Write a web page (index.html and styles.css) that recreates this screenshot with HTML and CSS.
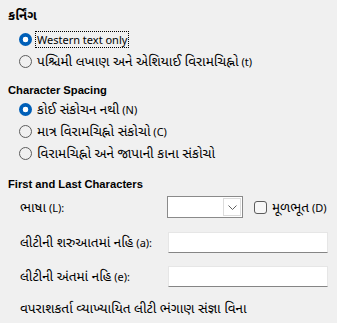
FILE: index.html
```html
<!DOCTYPE html>
<html lang="gu">
<head>
<meta charset="utf-8">
<link rel="stylesheet" href="styles.css">
</head>
<body>
<div class="dlg">
  <section class="grp">
    <div class="hd"><span class="gu">કર્નિંગ</span></div>
    <div class="opts">
      <div class="opt"><span class="radio on"></span><span class="txt focus">Western text only</span></div>
      <div class="opt"><span class="radio"></span><span class="txt"><span class="gu">પશ્ચિમી લખાણ અને એશિયાઈ વિરામચિહ્નો</span> (t)</span></div>
    </div>
  </section>
  <section class="grp g2">
    <div class="hd">Character Spacing</div>
    <div class="opts tight">
      <div class="opt"><span class="radio on"></span><span class="txt"><span class="gu">કોઈ સંકોચન નથી</span> (N)</span></div>
      <div class="opt"><span class="radio"></span><span class="txt"><span class="gu">માત્ર વિરામચિહ્નો સંકોચો</span> (C)</span></div>
      <div class="opt"><span class="radio"></span><span class="txt"><span class="gu">વિરામચિહ્નો અને જાપાની કાના સંકોચો</span></span></div>
    </div>
  </section>
  <section class="grp g3">
    <div class="hd">First and Last Characters</div>
    <div class="fields">
      <div class="row lang">
        <span class="lbl"><span class="gu">ભાષા</span> (L):</span>
        <div class="combo"><span class="combo-btn"><svg width="9" height="5" viewBox="0 0 9 5"><path d="M0.5 0.5 L4.5 4.5 L8.5 0.5" fill="none" stroke="#606060" stroke-width="1"/></svg></span></div>
        <span class="check"></span>
        <span class="chklbl"><span class="gu">મૂળભૂત</span> (D)</span>
      </div>
      <div class="row r2">
        <span class="lbl"><span class="gu">લીટીની શરુઆતમાં નહિ</span> (a):</span>
        <div class="edit"></div>
      </div>
      <div class="row r3">
        <span class="lbl"><span class="gu">લીટીની અંતમાં નહિ</span> (e):</span>
        <div class="edit"></div>
      </div>
      <div class="note"><span class="gu">વપરાશકર્તા વ્યાખ્યાયિત લીટી ભંગાણ સંજ્ઞા વિના</span></div>
    </div>
  </section>
</div>
</body>
</html>
```

FILE: styles.css
```css
html, body {
  margin: 0;
  background: #f0f0f0;
}
body {
  font-family: "Noto Sans", "Noto Sans Gujarati", "Lohit Gujarati", sans-serif;
  font-size: 11px;
  color: #000;
}
.gu {
  font-size: 13.6px;
}
.dlg {
  padding: 8px 0 0 8px;
}
.hd {
  font-family: "Liberation Sans", "Noto Sans", "Noto Sans Gujarati", sans-serif;
  font-size: 11.2px;
  font-weight: bold;
  height: 16px;
  line-height: 16px;
  white-space: nowrap;
}
.hd .gu {
  font-family: "Noto Sans Gujarati", "Lohit Gujarati", "Noto Sans", sans-serif;
  font-size: 13.3px;
}
.opts {
  padding-left: 11px;
  margin-top: 4px;
}
.opts.tight {
  margin-top: 0;
}
.opt {
  display: flex;
  align-items: center;
  height: 22px;
  white-space: nowrap;
}
.radio {
  flex: none;
  box-sizing: border-box;
  width: 13px;
  height: 13px;
  border-radius: 50%;
  border: 1px solid #5c5c5c;
  margin-right: 5px;
}
.radio.on {
  border: none;
  background: radial-gradient(circle, #fff 0 2.6px, #005fb8 3.1px);
}
.txt {
  line-height: 15px;
  padding: 0 1px;
  margin-left: -1px;
}
.focus {
  outline: 1px dotted #000;
}
.g2 {
  margin-top: 10px;
}
.g3 {
  margin-top: 12px;
}
.fields {
  padding-left: 12px;
  margin-top: 4px;
}
.row {
  display: flex;
  align-items: center;
  white-space: nowrap;
}
.lbl {
  width: 147px;
  flex: none;
}
.lang {
  height: 22px;
}
.combo {
  box-sizing: border-box;
  width: 76px;
  height: 22px;
  border: 1px solid #8a8a8a;
  background: #fff;
  display: flex;
  justify-content: flex-end;
  padding: 1px;
}
.combo-btn {
  box-sizing: border-box;
  width: 18px;
  height: 18px;
  border: 1px solid #dcdcdc;
  display: flex;
  align-items: center;
  justify-content: center;
}
.check {
  box-sizing: border-box;
  width: 13px;
  height: 13px;
  border: 1px solid #5c5c5c;
  border-radius: 3px;
  background: #f7f7f7;
  margin-left: 11px;
  margin-right: 5px;
}
.r2 {
  margin-top: 14px;
  height: 21px;
}
.r3 {
  margin-top: 13px;
  height: 21px;
}
.edit {
  box-sizing: border-box;
  margin-left: 1px;
  width: 160px;
  height: 21px;
  background: #fff;
  border: 1px solid #e6e6e6;
  border-bottom: 1px solid #858585;
}
.note {
  margin-top: 13px;
  height: 16px;
  line-height: 16px;
  white-space: nowrap;
}
```
